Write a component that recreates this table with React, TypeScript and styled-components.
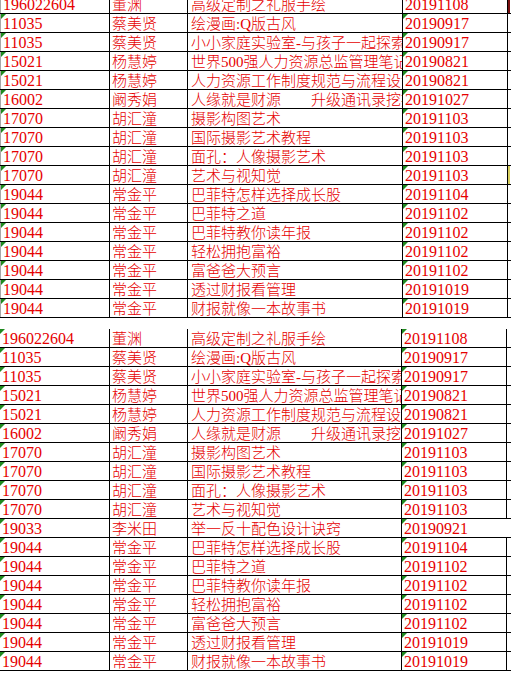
import React from "react";
import styled, { createGlobalStyle } from "styled-components";

const Global = createGlobalStyle`
  html, body { margin: 0; padding: 0; background: #ffffff; }
  body { width: 511px; height: 675px; overflow: hidden; }
`;

type Entry = { id: string; name: string; title: string; date: string };

const head: Entry[] = [
  { id: "196022604", name: "董渊", title: "高级定制之礼服手绘", date: "20191108" },
  { id: "11035", name: "蔡美贤", title: "绘漫画:Q版古风", date: "20190917" },
  { id: "11035", name: "蔡美贤", title: "小小家庭实验室-与孩子一起探索", date: "20190917" },
  { id: "15021", name: "杨慧婷", title: "世界500强人力资源总监管理笔记", date: "20190821" },
  { id: "15021", name: "杨慧婷", title: "人力资源工作制度规范与流程设计", date: "20190821" },
  { id: "16002", name: "阚秀娟", title: "人缘就是财源　　升级通讯录挖掘人脉", date: "20191027" },
  { id: "17070", name: "胡汇潼", title: "摄影构图艺术", date: "20191103" },
  { id: "17070", name: "胡汇潼", title: "国际摄影艺术教程", date: "20191103" },
  { id: "17070", name: "胡汇潼", title: "面孔：人像摄影艺术", date: "20191103" },
  { id: "17070", name: "胡汇潼", title: "艺术与视知觉", date: "20191103" },
];

const extra: Entry = { id: "19033", name: "李米田", title: "举一反十配色设计诀窍", date: "20190921" };

const tail: Entry[] = [
  { id: "19044", name: "常金平", title: "巴菲特怎样选择成长股", date: "20191104" },
  { id: "19044", name: "常金平", title: "巴菲特之道", date: "20191102" },
  { id: "19044", name: "常金平", title: "巴菲特教你读年报", date: "20191102" },
  { id: "19044", name: "常金平", title: "轻松拥抱富裕", date: "20191102" },
  { id: "19044", name: "常金平", title: "富爸爸大预言", date: "20191102" },
  { id: "19044", name: "常金平", title: "透过财报看管理", date: "20191019" },
  { id: "19044", name: "常金平", title: "财报就像一本故事书", date: "20191019" },
];

const Page = styled.div`
  display: flex;
  flex-direction: column;
  gap: 11px;
`;

const Viewport = styled.div`
  overflow: hidden;
`;

const Sheet = styled.div<{ $offset?: number }>`
  display: flex;
  flex-direction: column;
  margin-top: ${(p) => (p.$offset ? `${p.$offset}px` : "0")};
`;

const Row = styled.div<{ $cols: string }>`
  display: grid;
  grid-template-columns: ${(p) => p.$cols};
  height: 19px;
  box-sizing: border-box;
  border-bottom: 1px solid #000000;
`;

const Cell = styled.div<{
  $flag?: boolean;
  $num?: boolean;
  $edge?: boolean;
  $open?: boolean;
  $mark?: string;
  $pad?: number;
}>`
  position: relative;
  box-sizing: border-box;
  height: 18px;
  overflow: hidden;
  white-space: pre;
  padding: 1px 0 0 ${(p) => (p.$pad ?? 2)}px;
  border-right: 1px solid ${(p) => (p.$open ? "transparent" : "#000000")};
  border-left: ${(p) => (p.$edge ? "1px solid #a8a8a8" : "none")};
  box-shadow: ${(p) => (p.$mark ? `2px 0 0 ${p.$mark}` : "none")};
  font-family: "Liberation Serif", "Noto Sans CJK SC", serif;
  font-size: ${(p) => (p.$num ? "16px" : "15px")};
  font-weight: 300;
  line-height: 18px;
  color: #e60000;

  &::before {
    content: "";
    display: ${(p) => (p.$flag ? "block" : "none")};
    position: absolute;
    top: 0;
    left: 0;
    width: 0;
    height: 0;
    border-top: 5px solid #1f8a1f;
    border-right: 5px solid transparent;
  }
`;

type RowOpts = { edge?: boolean; open?: boolean; mark?: string };

function SheetRow({ e, cols, opts }: { e: Entry; cols: string; opts?: RowOpts }) {
  return (
    <Row $cols={cols}>
      <Cell $flag $num $edge={opts?.edge}>{e.id}</Cell>
      <Cell>{e.name}</Cell>
      <Cell $pad={3}>{e.title}</Cell>
      <Cell $flag $num $open={opts?.open} $mark={opts?.mark}>{e.date}</Cell>
    </Row>
  );
}

const TOP_COLS = "110px 78px 215px 105px";
const BOTTOM_COLS = "110px 78px 214px 105px";

export default function App() {
  const topRows = [...head, ...tail];
  const bottomRows = [...head, extra, ...tail];
  return (
    <>
      <Global />
      <Page>
        <Viewport>
          <Sheet $offset={-5}>
            {topRows.map((e, i) => (
              <SheetRow
                key={i}
                e={e}
                cols={TOP_COLS}
                opts={{
                  edge: true,
                  mark: i === 0 ? "#7a1010" : i === 9 ? "#d8d060" : undefined,
                }}
              />
            ))}
          </Sheet>
        </Viewport>
        <Sheet>
          {bottomRows.map((e, i) => (
            <SheetRow
              key={i}
              e={e}
              cols={BOTTOM_COLS}
              opts={{ open: e.id === "19033" }}
            />
          ))}
        </Sheet>
      </Page>
    </>
  );
}
